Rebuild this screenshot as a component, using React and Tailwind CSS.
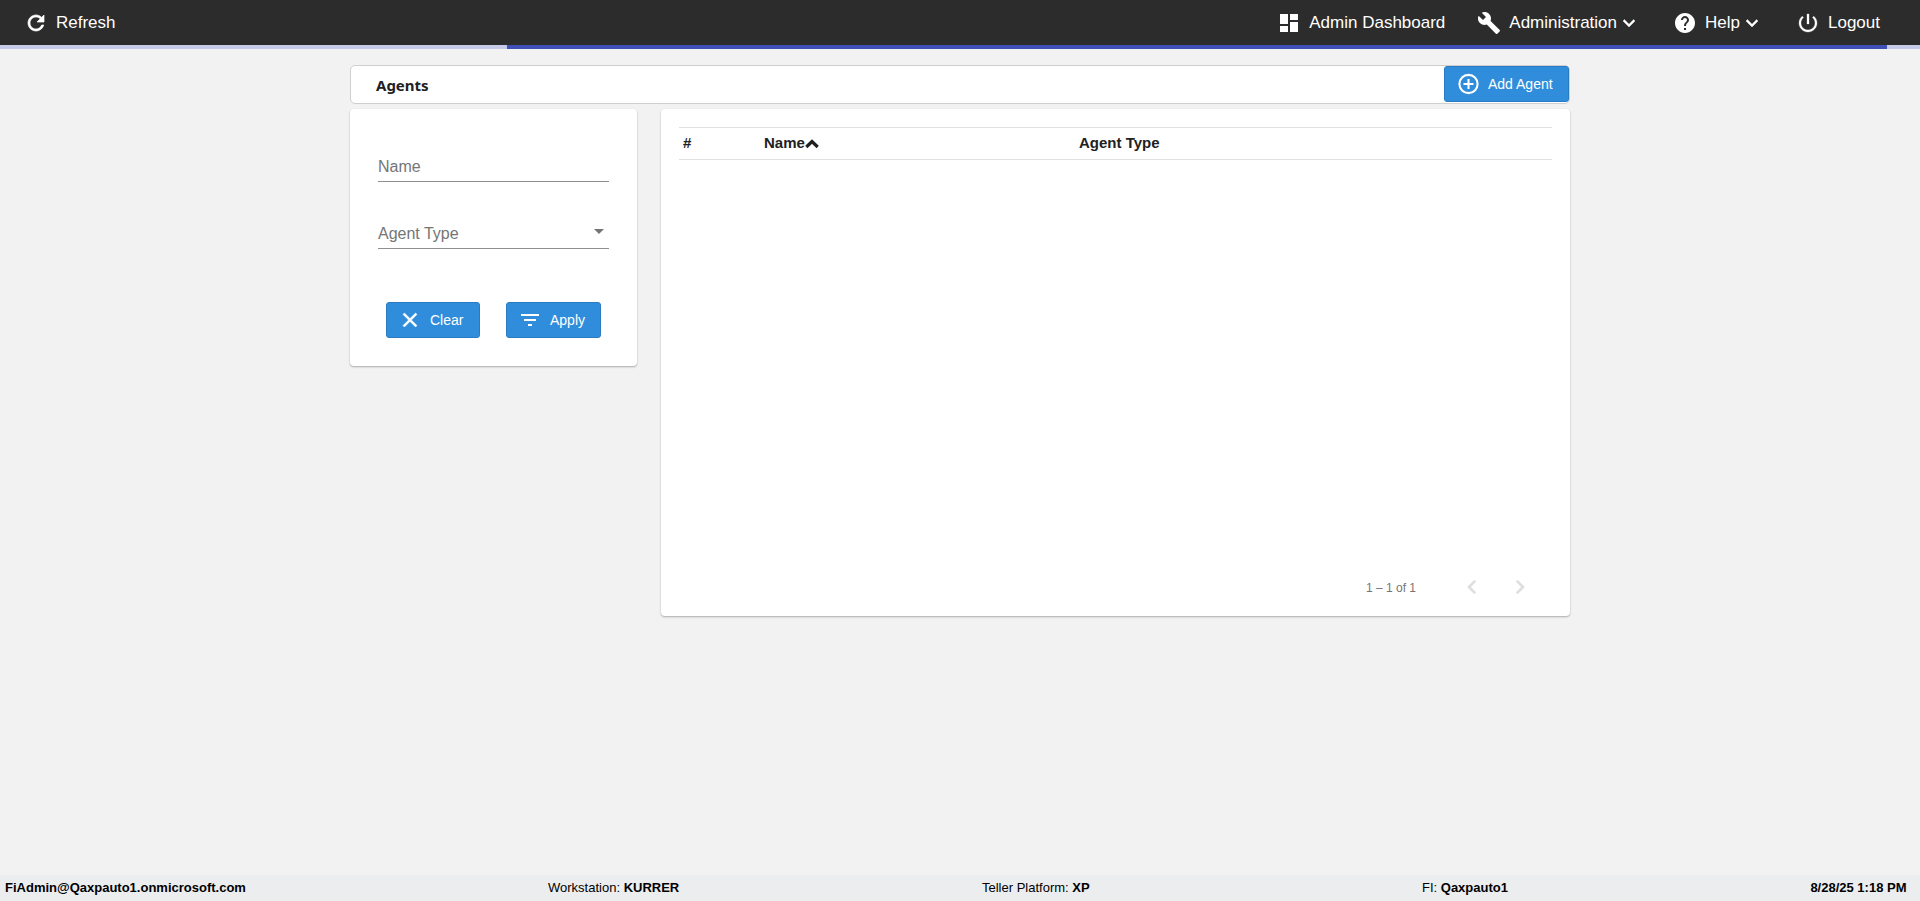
import React from "react";
import { MdDashboard, MdBuild, MdHelp, MdFilterList } from "react-icons/md";

function Glyph({ d, size = 24, weight = 0 }) {
  return (
    <svg width={size} height={size} viewBox="0 0 24 24" fill="currentColor" className="shrink-0">
      <path d={d} stroke="currentColor" strokeWidth={weight} />
    </svg>
  );
}

const RefreshIcon = () => (
  <Glyph
    weight={0.7}
    d="M17.65 6.35C16.2 4.9 14.21 4 12 4c-4.42 0-7.99 3.58-7.99 8s3.57 8 7.99 8c3.73 0 6.84-2.55 7.73-6h-2.08c-.82 2.33-3.04 4-5.65 4-3.31 0-6-2.69-6-6s2.69-6 6-6c1.66 0 3.14.69 4.22 1.78L13 11h7V4l-2.35 2.35z"
  />
);

const PowerIcon = () => (
  <Glyph
    weight={0.3}
    d="M13 3h-2v10h2V3zm4.83 2.17l-1.42 1.42C17.99 7.86 19 9.81 19 12c0 3.87-3.13 7-7 7s-7-3.13-7-7c0-2.19 1.01-4.14 2.58-5.42L6.17 5.17C4.23 6.82 3 9.26 3 12c0 4.97 4.03 9 9 9s9-4.03 9-9c0-2.74-1.23-5.18-3.17-6.83z"
  />
);

const CloseIcon = () => (
  <Glyph
    weight={0.5}
    d="M19 6.41L17.59 5 12 10.59 6.41 5 5 6.41 10.59 12 5 17.59 6.41 19 12 13.41 17.59 19 19 17.59 13.41 12z"
  />
);

const AddIcon = () => (
  <svg width="24" height="24" viewBox="0 0 24 24" fill="none" stroke="currentColor" className="shrink-0">
    <circle cx="12.5" cy="12" r="9.1" strokeWidth="2.1" />
    <path d="M12.5 7v10M7.5 12h10" strokeWidth="2.1" />
  </svg>
);

const ExpandIcon = () => (
  <Glyph weight={0.4} d="M16.59 8.59L12 13.17 7.41 8.59 6 10l6 6 6-6z" />
);

function NavItem({ icon: Icon, label, menu }) {
  return (
    <a className="flex items-center">
      <Icon size={24} />
      <span className="ml-2 text-[17px] leading-6">{label}</span>
      {menu && <ExpandIcon />}
    </a>
  );
}

function ActionButton({ icon: Icon, label, className }) {
  return (
    <button
      className={`flex h-9 items-center gap-2 rounded-[3px] border border-[#2a7bc1] bg-[#308ddc] pl-[11px] text-sm text-white ${className}`}
    >
      <Icon size={24} />
      <span>{label}</span>
    </button>
  );
}

function Footer() {
  return (
    <footer className="flex h-[26px] items-start bg-[#ecedef] pt-[3px] text-[13px] leading-5 text-black">
      <div className="w-[548px] pl-[5px] font-bold">FiAdmin@Qaxpauto1.onmicrosoft.com</div>
      <div className="w-[434px]">
        Workstation: <b>KURRER</b>
      </div>
      <div className="w-[440px]">
        Teller Platform: <b>XP</b>
      </div>
      <div className="flex-1">
        FI: <b>Qaxpauto1</b>
      </div>
      <div className="pr-[13.5px] font-bold">8/28/25 1:18 PM</div>
    </footer>
  );
}

export default function App() {
  return (
    <div className="flex h-[901px] w-[1920px] flex-col overflow-hidden bg-[#f2f2f2] font-['Liberation_Sans',Arial,sans-serif] text-[#212121]">
      <header className="flex h-[45px] items-center justify-between bg-[#2c2c2c] pt-px pr-10 pl-6 text-white">
        <NavItem icon={RefreshIcon} label="Refresh" />
        <nav className="flex gap-8">
          <NavItem icon={MdDashboard} label="Admin Dashboard" />
          <NavItem icon={MdBuild} label="Administration" menu />
          <NavItem icon={MdHelp} label="Help" menu />
          <NavItem icon={PowerIcon} label="Logout" />
        </nav>
      </header>
      <div className="h-1 bg-[#c5cae9] pr-[33px] pl-[507px]">
        <div className="h-full bg-[#3f51b5]" />
      </div>

      <main className="flex-1 pt-4 pl-[350px]">
        <div className="flex h-[39px] w-[1220px] justify-between rounded-[5px] border border-[#cfcfcf] bg-white">
          <h1 className="pt-2 pl-[25px] font-['Noto_Sans',sans-serif] text-[15px] leading-[22px] font-bold">
            Agents
          </h1>
          <ActionButton icon={AddIcon} label="Add Agent" className="w-[125px]" />
        </div>

        <div className="mt-[5px] flex items-start gap-6">
          <section className="h-[257px] w-[287px] rounded-[4px] bg-white px-7 pt-12 shadow-[0_1px_2px_rgba(0,0,0,0.3)]">
            <div className="flex h-[25px] items-start border-b border-[#8f8f8f] leading-5 text-[#757575]">
              Name
            </div>
            <div className="mt-[42px] flex h-[25px] items-start justify-between border-b border-[#8f8f8f] leading-5 text-[#757575]">
              <span>Agent Type</span>
              <svg className="mt-[5px] mr-[5px] h-[5px] w-[10px]" viewBox="0 0 10 5">
                <path d="M0 0h10L5 5z" fill="#757575" />
              </svg>
            </div>
            <div className="mt-[53px] flex gap-[26px] pl-2">
              <ActionButton icon={CloseIcon} label="Clear" className="w-[94px]" />
              <ActionButton icon={MdFilterList} label="Apply" className="w-[95px]" />
            </div>
          </section>

          <section className="flex h-[507px] w-[909px] flex-col justify-between rounded-[4px] bg-white px-[18px] pt-[18px] shadow-[0_1px_2px_rgba(0,0,0,0.3)]">
            <div className="flex h-[33px] items-center border-y border-[#dee0e3] pl-1 text-[15px] font-bold">
              <div className="w-[81px]">#</div>
              <div className="flex w-[315px] items-center">
                Name
                <svg className="h-[10px] w-[14px]" viewBox="0 0 14 10">
                  <path d="M1.3 8 7 2.5 12.7 8" fill="none" stroke="#212121" strokeWidth="3.2" />
                </svg>
              </div>
              <div>Agent Type</div>
            </div>
            <div className="flex h-[43px] items-start justify-end pr-[18px] text-[#757575]">
              <span className="mr-[42px] pt-[7px] text-xs">1 – 1 of 1</span>
              <div className="mr-5 text-[#dedede]">
                <Glyph size={28} weight={0.3} d="M15.41 7.41L14 6l-6 6 6 6 1.41-1.41L10.83 12z" />
              </div>
              <div className="text-[#dedede]">
                <Glyph size={28} weight={0.3} d="M10 6L8.59 7.41 13.17 12l-4.58 4.59L10 18l6-6z" />
              </div>
            </div>
          </section>
        </div>
      </main>
      <Footer />
    </div>
  );
}
